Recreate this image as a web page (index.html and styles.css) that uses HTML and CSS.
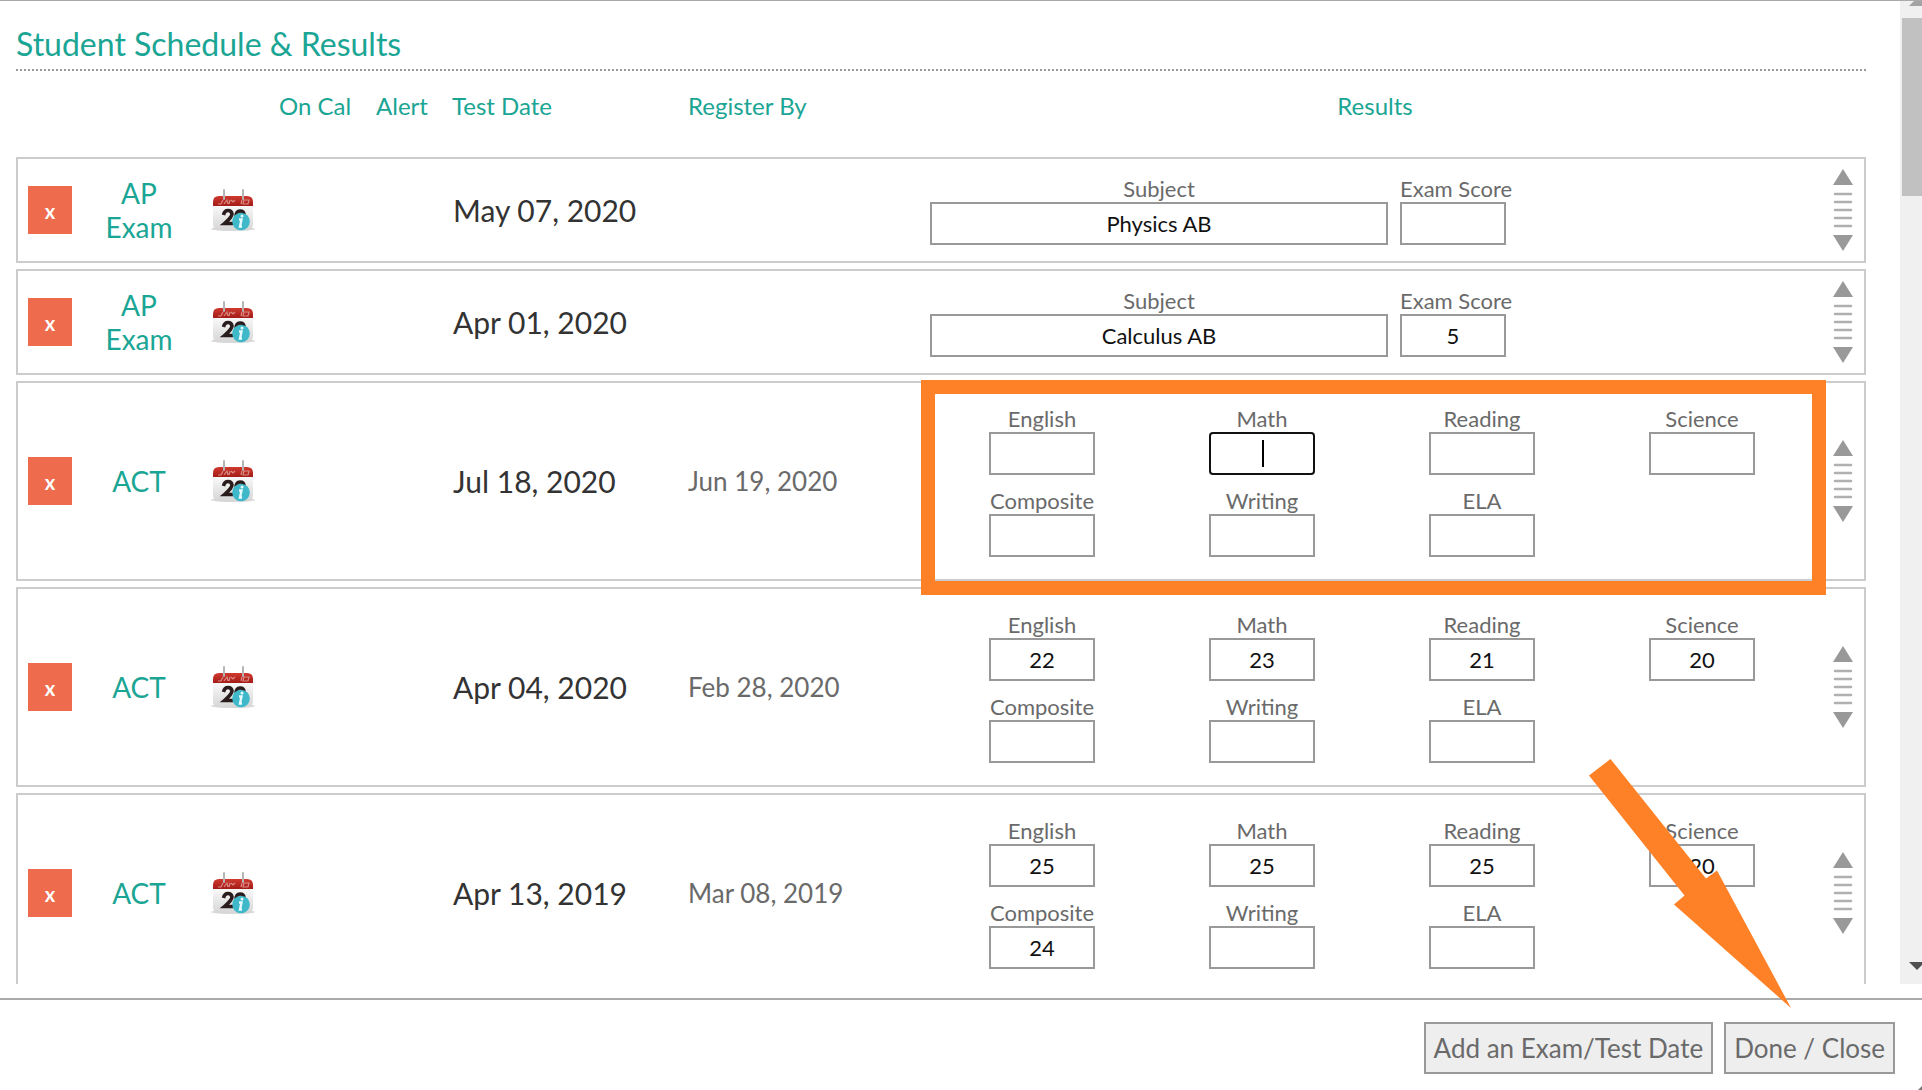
FILE: index.html
```html
<!DOCTYPE html>
<html lang="en">
<head>
<meta charset="utf-8">
<title>Student Schedule &amp; Results</title>
<link rel="stylesheet" href="styles.css">
</head>
<body>
<svg class="sprite" aria-hidden="true">
  <defs>
    <linearGradient id="cal-red" x1="0" y1="0" x2="0" y2="1"><stop offset="0" stop-color="#d0392f"/><stop offset="1" stop-color="#a31c17"/></linearGradient>
    <linearGradient id="cal-page" x1="0" y1="0" x2="0" y2="1"><stop offset="0" stop-color="#fbfbfb"/><stop offset="1" stop-color="#d6d6d6"/></linearGradient>
    <symbol id="calendar" viewBox="0 -1 46 42">
      <ellipse cx="23" cy="39" rx="22" ry="2" fill="#d9d9d9"/>
      <path d="M3 14h40v20q0 6-6 6H9q-6 0-6-6z" fill="url(#cal-page)"/>
      <path d="M3 16v-4q0-6 6-6h28q6 0 6 6v4z" fill="url(#cal-red)"/>
      <path d="M8 14h3l2-4M14 14l3-4 1 4M20 10l-1 4M21 10l2 2 2-2M31 14l1-4M34 10h5l-1 4h-5z" fill="none" stroke="#d98a84" stroke-width="1.200"/>
      <path d="M14 0v9M33 0v9" stroke="#b5b5b5" stroke-width="2" stroke-linecap="round"/>
      <path d="M13.500 25q1-4.500 4.500-4.500t4 3.500q0 3-7.500 9.500H23M26 27q0-6 4-6t4 4" fill="none" stroke="#2a1c1c" stroke-width="3.600"/>
      <circle cx="31" cy="31.500" r="8.800" fill="#3fb8c9"/>
      <path d="M29 29.500h2.500l-1.500 7h2" fill="none" stroke="#e6fbff" stroke-width="2.400"/>
      <circle cx="32" cy="26" r="1.500" fill="#e6fbff"/>
    </symbol>
    <symbol id="grip" viewBox="0 0 20 82">
      <path d="M10 0l10 16H0zM10 82l10-16H0z" fill="#999"/>
      <path d="M2 25h16M2 33h16M2 41h16M2 49h16M2 57h16" stroke="#b0b0b0" stroke-width="2.500" stroke-linecap="round"/>
    </symbol>
  </defs>
</svg>

<div class="dialog">
  <div class="pane">
    <main class="content">
      <h1 class="title">Student Schedule &amp; Results</h1>
      <table class="schedule">
        <colgroup>
          <col class="col-delete"><col class="col-type"><col class="col-icon"><col class="col-cal"><col class="col-alert"><col class="col-date"><col class="col-register"><col><col class="col-grip">
        </colgroup>
        <thead>
          <tr>
            <td></td><td></td><td></td>
            <th class="center">On Cal</th>
            <th class="center">Alert</th>
            <th class="date">Test Date</th>
            <th class="register">Register By</th>
            <th class="center">Results</th>
            <td></td>
          </tr>
        </thead>
        <tbody>
          <tr>
            <td class="delete"><button class="remove" type="button">x</button></td>
            <td class="type">AP Exam</td>
            <td class="center"><svg class="calendar"><use href="#calendar"/></svg></td>
            <td></td><td></td>
            <td class="date">May 07, 2020</td>
            <td class="register"></td>
            <td class="results">
              <div class="ap-fields">
                <label class="field subject">Subject<input type="text" value="Physics AB"></label>
                <label class="field score">Exam Score<input type="text"></label>
              </div>
            </td>
            <td class="move"><svg class="grip"><use href="#grip"/></svg></td>
          </tr>
          <tr>
            <td class="delete"><button class="remove" type="button">x</button></td>
            <td class="type">AP Exam</td>
            <td class="center"><svg class="calendar"><use href="#calendar"/></svg></td>
            <td></td><td></td>
            <td class="date">Apr 01, 2020</td>
            <td class="register"></td>
            <td class="results">
              <div class="ap-fields">
                <label class="field subject">Subject<input type="text" value="Calculus AB"></label>
                <label class="field score">Exam Score<input type="text" value="5"></label>
              </div>
            </td>
            <td class="move"><svg class="grip"><use href="#grip"/></svg></td>
          </tr>
          <tr class="act">
            <td class="delete"><button class="remove" type="button">x</button></td>
            <td class="type">ACT</td>
            <td class="center"><svg class="calendar"><use href="#calendar"/></svg></td>
            <td></td><td></td>
            <td class="date">Jul 18, 2020</td>
            <td class="register">Jun 19, 2020</td>
            <td class="results">
              <div class="act-fields">
                <label class="field">English<input type="text"></label>
                <label class="field editing">Math<input type="text"><span class="caret"></span></label>
                <label class="field">Reading<input type="text"></label>
                <label class="field">Science<input type="text"></label>
                <label class="field">Composite<input type="text"></label>
                <label class="field">Writing<input type="text"></label>
                <label class="field">ELA<input type="text"></label>
              </div>
              <div class="highlight"></div>
            </td>
            <td class="move"><svg class="grip"><use href="#grip"/></svg></td>
          </tr>
          <tr class="act">
            <td class="delete"><button class="remove" type="button">x</button></td>
            <td class="type">ACT</td>
            <td class="center"><svg class="calendar"><use href="#calendar"/></svg></td>
            <td></td><td></td>
            <td class="date">Apr 04, 2020</td>
            <td class="register">Feb 28, 2020</td>
            <td class="results">
              <div class="act-fields">
                <label class="field">English<input type="text" value="22"></label>
                <label class="field">Math<input type="text" value="23"></label>
                <label class="field">Reading<input type="text" value="21"></label>
                <label class="field">Science<input type="text" value="20"></label>
                <label class="field">Composite<input type="text"></label>
                <label class="field">Writing<input type="text"></label>
                <label class="field">ELA<input type="text"></label>
              </div>
            </td>
            <td class="move"><svg class="grip"><use href="#grip"/></svg></td>
          </tr>
          <tr class="act">
            <td class="delete"><button class="remove" type="button">x</button></td>
            <td class="type">ACT</td>
            <td class="center"><svg class="calendar"><use href="#calendar"/></svg></td>
            <td></td><td></td>
            <td class="date">Apr 13, 2019</td>
            <td class="register">Mar 08, 2019</td>
            <td class="results">
              <div class="act-fields">
                <label class="field">English<input type="text" value="25"></label>
                <label class="field">Math<input type="text" value="25"></label>
                <label class="field">Reading<input type="text" value="25"></label>
                <label class="field">Science<input type="text" value="20"></label>
                <label class="field">Composite<input type="text" value="24"></label>
                <label class="field">Writing<input type="text"></label>
                <label class="field">ELA<input type="text"></label>
              </div>
            </td>
            <td class="move"><svg class="grip"><use href="#grip"/></svg></td>
          </tr>
        </tbody>
      </table>
    </main>
    <div class="scrollbar">
      <svg class="scroll-up" viewBox="0 0 22 17"><path d="M9 5L14 0H22v5z" fill="#a3a3a3"/></svg>
      <div class="thumb"></div>
      <svg class="scroll-down" viewBox="0 0 22 22"><path d="M9 0h16l-8 8z" fill="#505050"/></svg>
    </div>
  </div>
  <footer class="actions">
    <button class="action" type="button">Add an Exam/Test Date</button>
    <button class="action" type="button">Done / Close</button>
  </footer>
  <svg class="pointer" viewBox="0 0 202 249" aria-hidden="true"><path d="M21.500 0L0 16.500L95.500 136.500L85 145.500L202 249L128 111.500L117 119.500z" fill="#ff8127"/></svg>
  <svg class="resize" viewBox="0 0 4 4" aria-hidden="true"><path d="M4 0v4H0z" fill="#777"/></svg>
</div>
</body>
</html>
```
FILE: styles.css
```css
* { box-sizing: border-box; }

body {
  margin: 0;
  background: #fff;
  color: #6a6a6a;
  font: 24px/28px Lato, "Liberation Sans", sans-serif;
}

.sprite { position: absolute; width: 0; height: 0; }

.dialog {
  position: relative;
  display: flex;
  flex-direction: column;
  height: 100vh;
  overflow: hidden;
  border-top: 1px solid #aaa;
}

.pane {
  display: flex;
  flex: 1;
  min-height: 0;
  overflow: hidden;
}

.content {
  flex: 1;
  min-width: 0;
  padding: 0 34px 0 16px;
}

.title {
  margin: 0;
  padding: 23px 0 5px;
  border-bottom: 2px dotted #999;
  color: #1aa594;
  font-size: 32px;
  font-weight: 400;
  line-height: 40px;
}

.schedule {
  width: 100%;
  table-layout: fixed;
  border-spacing: 0 6px;
}

.col-delete { width: 68px; }
.col-type { width: 108px; }
.col-icon, .col-cal { width: 82px; }
.col-alert { width: 92px; }
.col-date { width: 238px; }
.col-register { width: 244px; }
.col-grip { width: 46px; }

td, th { padding: 0; text-align: left; }

th {
  height: 74px;
  padding-top: 15px;
  vertical-align: top;
  color: #1aa594;
  font-weight: 400;
}

tbody td {
  height: 106px;
  border: solid #ccc;
  border-width: 2px 0;
}
tbody .act td { height: 200px; }
tbody td:first-child { border-left-width: 2px; }
tbody td:last-child { border-right-width: 2px; }

.center { text-align: center; }
.schedule .delete { padding-left: 10px; }
.schedule .move { padding-left: 2px; }
.schedule .date { padding-left: 4px; }
.schedule .register { padding-left: 2px; }

.schedule tbody .date { padding-left: 5px; color: #333; font-size: 30px; }
tbody .register { font-size: 26px; }

.schedule .type {
  padding: 0 15px 0 17px;
  color: #1aa594;
  font-size: 28px;
  line-height: 34px;
  text-align: center;
}

.remove {
  display: block;
  width: 44px;
  height: 48px;
  padding: 2px 0 0;
  border: 0;
  background: #ee6b4d;
  color: #fff;
  font: 700 20px/24px Lato, sans-serif;
}

.calendar, .grip { display: block; margin: 0 auto; }
.calendar { width: 46px; height: 42px; }
.grip { width: 20px; height: 82px; }

.results { position: relative; }

.ap-fields { display: flex; gap: 12px; }

.act-fields {
  display: grid;
  grid-template-columns: repeat(4, 1fr);
  row-gap: 12px;
  padding: 0 8px 0 2px;
}

.field {
  position: relative;
  display: flex;
  flex-direction: column;
  align-items: center;
  font-size: 22px;
  line-height: 27px;
  white-space: nowrap;
}
.subject { flex: 0 1 458px; }
.score { align-items: flex-start; }

.field input {
  width: 106px;
  height: 43px;
  padding: 0 4px;
  border: 2px solid #999;
  background: #fff;
  color: #111;
  font: 22px/28px Lato, sans-serif;
  text-align: center;
}
.subject input { width: 100%; }
.editing input { border-color: #111; border-radius: 4px; }

.caret {
  position: absolute;
  bottom: 8px;
  left: 50%;
  width: 2px;
  height: 27px;
  background: #000;
}

.highlight {
  position: absolute;
  z-index: 1;
  inset: -3px -6px -16px -9px;
  border: 14px solid #ff8127;
  pointer-events: none;
}

.scrollbar {
  display: flex;
  flex-direction: column;
  width: 22px;
  background: #f0f0f0;
}
.scroll-up { height: 17px; }
.thumb { height: 178px; margin-left: 2px; background: #c1c1c1; }
.scroll-down { height: 22px; margin-top: auto; }

.actions {
  display: flex;
  justify-content: flex-end;
  gap: 11px;
  margin-top: 14px;
  padding: 22px 27px 16px;
  border-top: 2px solid #aaa;
}

.action {
  height: 52px;
  padding: 0 8px;
  border: 2px solid #999;
  background: #eee;
  color: #6a6a6a;
  font: 26px/32px Lato, sans-serif;
}

.pointer {
  position: absolute;
  z-index: 2;
  right: 131px;
  bottom: 82px;
  width: 202px;
  height: 249px;
  pointer-events: none;
}

.resize {
  position: absolute;
  right: 0;
  bottom: 0;
  width: 4px;
  height: 4px;
}
```
